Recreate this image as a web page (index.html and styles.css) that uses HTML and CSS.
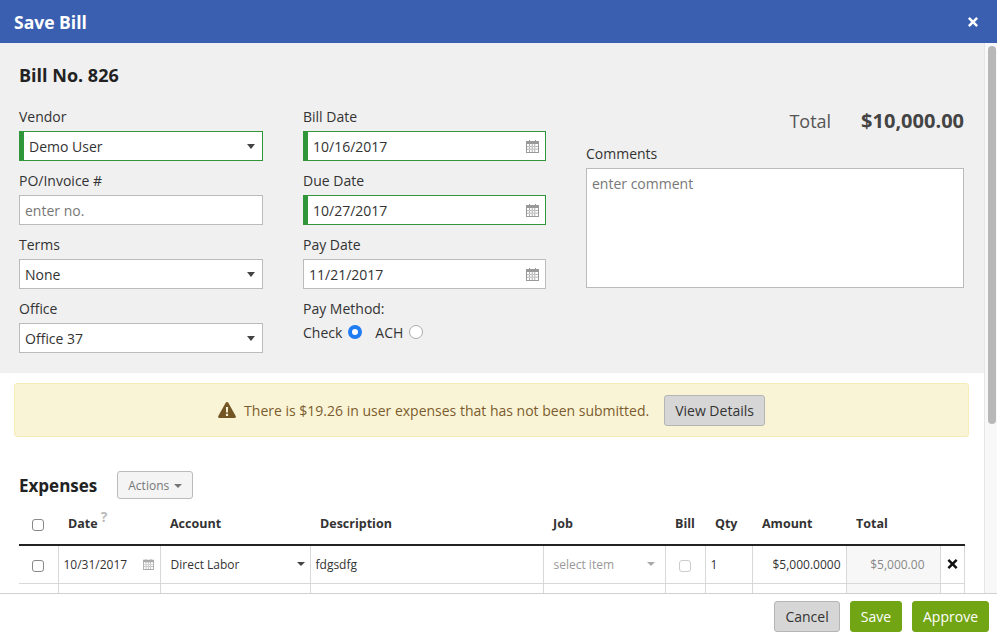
FILE: index.html
```html
<!DOCTYPE html>
<html>
<head>
    <meta http-equiv="content-type" content="text/html; charset=UTF-8">
    <title>Save Bill</title>
    <link rel="stylesheet" href="styles.css">
</head>

<body>
    <svg class="defs" width="0" height="0">
        <symbol id="cal" viewBox="0 0 13 14">
            <path d="M0 2h3V1h1v1h5V1h1v1h3v12H0z M1 5v8h11V5z M1 7.2h11v.8H1z M1 9.8h11v.8H1z M3.2 5h.8v8h-.8z M5.8 5h.8v8h-.8z M8.4 5h.8v8h-.8z" fill-rule="evenodd"></path>
        </symbol>
        <symbol id="times" viewBox="0 0 10 10">
            <path d="M1.700 0L5 3.200 8.300 0 10 1.700 6.800 5 10 8.300 8.300 10 5 6.800 1.700 10 0 8.300 3.200 5 0 1.700z"></path>
        </symbol>
    </svg>

    <header class="titlebar">
        <h1>Save Bill</h1>
        <svg class="close"><use href="#times"></use></svg>
    </header>

    <div class="middle">
        <main class="content">
            <section class="billform">
                <h2>Bill No. 826</h2>
                <div class="cols">
                    <div class="col">
                        <div class="field">
                            <label>Vendor</label>
                            <div class="box good"><span>Demo User</span><i class="caret"></i></div>
                        </div>
                        <div class="field">
                            <label>PO/Invoice #</label>
                            <div class="box"><span class="hint">enter no.</span></div>
                        </div>
                        <div class="field">
                            <label>Terms</label>
                            <div class="box"><span>None</span><i class="caret"></i></div>
                        </div>
                        <div class="field">
                            <label>Office</label>
                            <div class="box"><span>Office 37</span><i class="caret"></i></div>
                        </div>
                    </div>
                    <div class="col narrow">
                        <div class="field">
                            <label>Bill Date</label>
                            <div class="box good"><span>10/16/2017</span><svg class="calicon"><use href="#cal"></use></svg></div>
                        </div>
                        <div class="field">
                            <label>Due Date</label>
                            <div class="box good"><span>10/27/2017</span><svg class="calicon"><use href="#cal"></use></svg></div>
                        </div>
                        <div class="field">
                            <label>Pay Date</label>
                            <div class="box"><span>11/21/2017</span><svg class="calicon"><use href="#cal"></use></svg></div>
                        </div>
                        <div class="field">
                            <label>Pay Method:</label>
                            <div class="radios">
                                <span>Check</span><i class="radio on"></i>
                                <span class="second">ACH</span><i class="radio"></i>
                            </div>
                        </div>
                    </div>
                    <div class="col wide">
                        <div class="total"><span>Total</span><b>$10,000.00</b></div>
                        <label>Comments</label>
                        <div class="comment hint">enter comment</div>
                    </div>
                </div>
            </section>

            <div class="notice">
                <svg class="warn" viewBox="0 0 18 16"><path d="M9 0c.6 0 1 .3 1.300.8l7.400 13.300c.5.900-.1 1.900-1.100 1.900H1.400c-1 0-1.600-1-1.100-1.900L7.700.8C8 .3 8.400 0 9 0zM7.900 5l.2 5.600h1.800L10.100 5zM7.900 11.800v2.200h2.200v-2.200z" fill-rule="evenodd"></path></svg>
                <span>There is $19.26 in user expenses that has not been submitted.</span>
                <button class="btn gray details">View Details</button>
            </div>

            <section class="expenses">
                <div class="exphead">
                    <h3>Expenses</h3>
                    <button class="actions">Actions <i class="caret small"></i></button>
                </div>
                <table>
                    <colgroup>
                        <col class="c1"><col class="c2"><col class="c3"><col class="c4"><col class="c5"><col class="c6"><col class="c7"><col class="c8"><col class="c9"><col class="c10">
                    </colgroup>
                    <thead>
                        <tr>
                            <th class="mid"><i class="check head"></i></th>
                            <th>Date<span class="tip">?</span></th>
                            <th>Account</th>
                            <th>Description</th>
                            <th>Job</th>
                            <th>Bill</th>
                            <th>Qty</th>
                            <th>Amount</th>
                            <th>Total</th>
                            <th></th>
                        </tr>
                    </thead>
                    <tbody>
                        <tr>
                            <td class="mid"><i class="check"></i></td>
                            <td><div class="cell">10/31/2017<svg class="calicon tiny"><use href="#cal"></use></svg></div></td>
                            <td class="pick"><div class="cell">Direct Labor<i class="caret small dark"></i></div></td>
                            <td>fdgsdfg</td>
                            <td class="pick"><div class="cell faded">select item<i class="caret small light"></i></div></td>
                            <td class="mid"><i class="check pale"></i></td>
                            <td>1</td>
                            <td class="right">$5,000.0000</td>
                            <td class="right locked">$5,000.00</td>
                            <td class="mid remove"><svg class="x"><use href="#times"></use></svg></td>
                        </tr>
                        <tr>
                            <td></td><td></td><td></td><td></td><td></td><td></td><td></td><td></td><td class="locked"></td><td></td>
                        </tr>
                    </tbody>
                </table>
            </section>
        </main>
        <div class="scrollbar"><div class="thumb"></div></div>
    </div>

    <footer class="buttons">
        <button class="btn gray">Cancel</button>
        <button class="btn green">Save</button>
        <button class="btn green">Approve</button>
    </footer>
</body>

</html>
```
FILE: styles.css
```css
* {
    box-sizing: border-box;
}

html, body {
    margin: 0;
    height: 100%;
}

body {
    display: flex;
    flex-direction: column;
    height: 637px;
    overflow: hidden;
    background: #fff;
    color: #333;
    font-family: "Open Sans", sans-serif;
    font-size: 14px;
}

.defs {
    position: absolute;
}

.titlebar {
    flex: 0 0 43px;
    display: flex;
    align-items: center;
    justify-content: space-between;
    padding: 0 19px 0 14px;
    background: #3a5fb0;
    color: #fff;
}

.titlebar h1 {
    margin: 0;
    font-size: 17.5px;
    font-weight: 700;
}

.close {
    width: 10px;
    height: 10px;
    fill: #fff;
}

.middle {
    flex: 0 0 550px;
    display: flex;
    overflow: hidden;
}

.content {
    flex: 1;
    overflow: hidden;
}

.scrollbar {
    flex: 0 0 13px;
    padding: 3px 1px 0 3px;
    background: #f8f8f8;
    border-left: 1px solid #e6e6e6;
}

.thumb {
    height: 378px;
    border-radius: 4px;
    background: #b8b8b8;
}

.billform {
    height: 330px;
    padding: 21px 20px 0 19px;
    background: #f0f0f0;
}

.billform h2 {
    margin: 0 0 20px;
    color: #222;
    font-size: 18px;
    line-height: 23px;
    font-weight: 700;
}

.cols {
    display: flex;
}

.col {
    width: 244px;
    margin-right: 40px;
}

.col.narrow {
    width: 243px;
}

.col.wide {
    flex: 1;
    width: auto;
    margin-right: 0;
}

.field {
    height: 64px;
}

label {
    display: block;
    height: 24px;
    line-height: 20px;
    color: #333;
}

.box {
    display: flex;
    align-items: center;
    justify-content: space-between;
    height: 30px;
    padding: 0 6px 0 5px;
    background: #fff;
    border: 1px solid #bbb;
}

.box .caret {
    margin-right: 1px;
}

.box.good {
    padding-left: 5px;
    border: 1px solid #2f9639;
    border-left-width: 5px;
}

.hint {
    color: #777;
}

.caret {
    width: 0;
    height: 0;
    border-left: 4.5px solid transparent;
    border-right: 4.5px solid transparent;
    border-top: 5px solid #444;
}

.caret.small {
    display: inline-block;
    vertical-align: middle;
    margin-left: 2px;
    border-left-width: 4px;
    border-right-width: 4px;
    border-top-width: 4px;
    border-top-color: #777;
}

.caret.dark {
    border-top-color: #444;
}

.caret.light {
    border-top-color: #aaa;
    margin-right: 5px;
}

.calicon {
    width: 13px;
    height: 14px;
    fill: #999;
}

.calicon.tiny {
    width: 11px;
    height: 12px;
    margin-right: 1px;
    fill: #aaa;
}

.radios {
    display: flex;
    align-items: center;
    height: 24px;
    margin-top: -3px;
}

.radio {
    width: 14px;
    height: 14px;
    margin-left: 6px;
    border: 1px solid #aaa;
    border-radius: 50%;
    background: #fff;
}

.radio.on {
    border: 4.5px solid #1f7cf2;
}

.second {
    margin-left: 13px;
}

.total {
    display: flex;
    justify-content: flex-end;
    align-items: baseline;
    height: 37px;
    padding-top: 2px;
    line-height: 24px;
    color: #555;
    font-size: 18px;
}

.total b {
    margin-left: 30px;
    color: #444;
    font-size: 20px;
}

.comment {
    height: 120px;
    padding: 5px;
    background: #fff;
    border: 1px solid #bbb;
}

.notice {
    display: flex;
    align-items: center;
    justify-content: center;
    height: 54px;
    margin: 10px 15px 0 14px;
    background: #faf4d6;
    border: 1px solid #f6ecb6;
    border-radius: 3px;
    color: #7a5c2e;
}

.warn {
    width: 18px;
    height: 16px;
    margin-right: 8px;
    fill: #745524;
}

.btn {
    height: 31px;
    padding: 0 10px;
    border: 1px solid #b5b5b5;
    border-radius: 3px;
    color: #333;
    font-family: inherit;
    font-size: 14px;
}

.btn.gray {
    background: #d6d6d6;
}

.btn.green {
    background: #72a514;
    border-color: #72a514;
    color: #fff;
}

.details {
    margin-left: 15px;
}

.expenses {
    padding: 34px 19px 0;
}

.exphead {
    display: flex;
    align-items: center;
    height: 28px;
}

.exphead h3 {
    margin: 0 20px 0 0;
    color: #222;
    font-size: 17px;
    font-weight: 700;
}

.actions {
    height: 28px;
    padding: 0 10px;
    background: #f4f4f4;
    border: 1px solid #bbb;
    border-radius: 3px;
    color: #777;
    font-family: inherit;
    font-size: 12px;
}

table {
    width: 945px;
    margin-top: 4px;
    table-layout: fixed;
    border-collapse: collapse;
    font-size: 12px;
}

.c1 { width: 39px; }
.c2 { width: 102px; }
.c3 { width: 150px; }
.c4 { width: 233px; }
.c5 { width: 122px; }
.c6 { width: 40px; }
.c7 { width: 47px; }
.c8 { width: 94px; }
.c9 { width: 94px; }
.c10 { width: 24px; }

th {
    height: 42px;
    padding: 0 10px;
    text-align: left;
    border-bottom: 2px solid #222;
    color: #333;
    font-size: 12.5px;
    font-weight: 700;
    white-space: nowrap;
}

th.mid {
    padding: 0 2px 0 0;
}

.tip {
    margin-left: 3px;
    vertical-align: 6px;
    color: #bbb;
    font-size: 14px;
    line-height: 0;
}

td {
    height: 38px;
    padding: 0 5px;
    border: 1px solid #d8d8d8;
    border-top: 0;
    color: #333;
    white-space: nowrap;
}

td:first-child {
    border-left: 0;
}

td.pick {
    padding-left: 10px;
}

.mid {
    text-align: center;
}

.right {
    text-align: right;
}

td.locked {
    padding-right: 15px;
    background: #f7f7f7;
    color: #888;
}

.cell {
    display: flex;
    align-items: center;
    justify-content: space-between;
}

.faded {
    color: #999;
}

.check {
    display: inline-block;
    vertical-align: middle;
    width: 12px;
    height: 12px;
    background: #fff;
    border: 1px solid #888;
    border-radius: 3px;
}

.check.pale {
    border-color: #ccc;
}

td.remove {
    padding: 0 0 0 1px;
}

.x {
    display: block;
    width: 11px;
    height: 10px;
    margin: 0 auto;
    fill: #111;
}

.buttons {
    flex: 1;
    display: flex;
    justify-content: flex-end;
    align-items: flex-start;
    gap: 10px;
    padding: 7px 8px 0 0;
    background: #fff;
    border-top: 1px solid #d0d0d0;
}
```
